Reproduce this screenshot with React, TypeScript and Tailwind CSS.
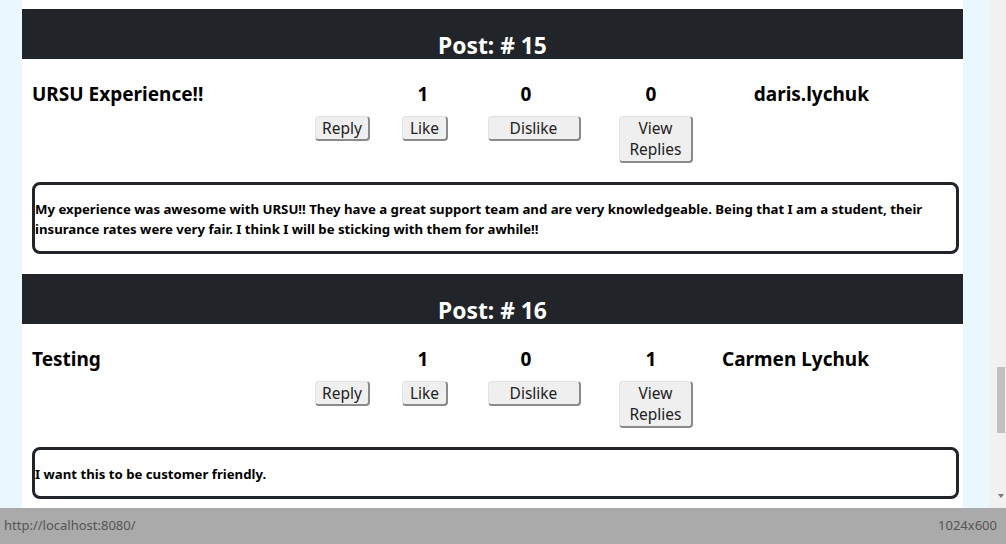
import React from 'react'

type Post = {
  id: number
  title: string
  likes: number
  dislikes: number
  replies: number
  author: string
  body: string
}

const posts: Post[] = [
  {
    id: 15,
    title: 'URSU Experience!!',
    likes: 1,
    dislikes: 0,
    replies: 0,
    author: 'daris.lychuk',
    body: 'My experience was awesome with URSU!! They have a great support team and are very knowledgeable. Being that I am a student, their insurance rates were very fair. I think I will be sticking with them for awhile!!',
  },
  {
    id: 16,
    title: 'Testing',
    likes: 1,
    dislikes: 0,
    replies: 1,
    author: 'Carmen Lychuk',
    body: 'I want this to be customer friendly.',
  },
]

function Btn({ children, className }: { children: React.ReactNode; className?: string }) {
  return (
    <button
      className={`bg-[#efefef] text-[#222] text-[15.5px] leading-[21px] rounded-[4px] border border-[#e2e2e2] border-r-2 border-b-2 border-r-[#8a8a8a] border-b-[#8a8a8a] ${className ?? ''}`}
    >
      {children}
    </button>
  )
}

function PostCard({ post }: { post: Post }) {
  return (
    <div className="bg-white pb-[20px]">
      <div className="h-[50px] bg-[#212529] flex justify-center pt-[23px]">
        <h2 className="text-white text-[22.8px] leading-[27px] font-bold">Post: # {post.id}</h2>
      </div>

      <div className="pl-[10px] pr-[4px]">
        <div className="grid grid-cols-[273px_75px_90px_120px_130px_149px] pt-[23px] text-[19px] leading-[24px] font-bold text-black">
          <div>{post.title}</div>
          <div />
          <div className="text-center pr-[4px]">{post.likes}</div>
          <div className="text-center pr-[8px]">{post.dislikes}</div>
          <div className="text-center pr-[8px]">{post.replies}</div>
          <div className="text-right">{post.author}</div>
        </div>

        <div className="grid grid-cols-[273px_75px_90px_120px_130px_149px] mt-[10px] items-start">
          <div />
          <div className="flex justify-center">
            <Btn className="w-[55px] h-[25px]">Reply</Btn>
          </div>
          <div className="flex justify-center">
            <Btn className="w-[46px] h-[25px]">Like</Btn>
          </div>
          <div className="flex justify-center pl-[8px]">
            <Btn className="w-[93px] h-[25px]">Dislike</Btn>
          </div>
          <div className="flex justify-center pl-[2px]">
            <Btn className="w-[74px] h-[47px]">
              View
              <br />
              Replies
            </Btn>
          </div>
          <div />
        </div>

        <div className="mt-[19px] border-[3px] border-[#212529] rounded-[8px] pt-[14px] pb-[12px] text-[13.2px] leading-[20px] font-bold text-black">
          {post.body}
        </div>
      </div>
    </div>
  )
}

export default function App() {
  return (
    <div
      className="relative w-full h-[544px] overflow-hidden flex"
      style={{ fontFamily: '"Noto Sans", "Open Sans", sans-serif' }}
    >
      {/* page */}
      <div className="flex-1 bg-[#eaf7fe] pl-[22px] pr-[26px] overflow-hidden">
        <div className="h-[9px] bg-white" />
        {posts.map((p) => (
          <PostCard key={p.id} post={p} />
        ))}
      </div>

      {/* scrollbar */}
      <div className="w-[17px] bg-[#f1f1f1] flex flex-col items-end pr-[1px]">
        <div className="mt-[367px] w-[8px] h-[66px] bg-[#c1c1c1]" />
        <div className="mt-[61px] mr-[1px] w-0 h-0 border-l-[3px] border-r-[3px] border-t-[4px] border-l-transparent border-r-transparent border-t-[#777]" />
      </div>

      {/* browser status bar */}
      <div className="absolute left-0 right-0 bottom-0 h-[36px] bg-[#aaaaaa] flex items-center justify-between px-[4px] pr-[9px] text-[13px] text-[#555]">
        <span>http://localhost:8080/</span>
        <span>1024x600</span>
      </div>
    </div>
  )
}
